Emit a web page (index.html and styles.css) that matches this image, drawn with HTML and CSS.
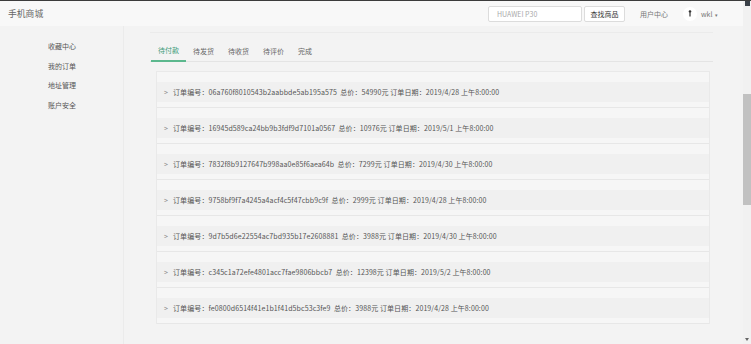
FILE: index.html
```html
<!DOCTYPE html>
<html lang="zh">
<head>
<meta charset="utf-8">
<title>手机商城</title>
<link rel="stylesheet" href="styles.css">
</head>
<body>
<div class="page">
  <header class="header">
    <div class="brand">手机商城</div>
    <div class="header-right">
      <input class="search" type="text" placeholder="HUAWEI P30">
      <button class="search-btn">查找商品</button>
      <span class="user-center">用户中心</span>
      <span class="avatar">
        <svg width="6" height="7" viewBox="0 0 6 7"><circle cx="3" cy="1.6" r="1.3" fill="#333"/><rect x="2.4" y="3" width="1.2" height="3.5" fill="#333"/></svg>
      </span>
      <span class="username">wkl <span class="caret">▾</span></span>
    </div>
  </header>
  <div class="body">
    <nav class="sidebar">
      <a class="side-item">收藏中心</a>
      <a class="side-item">我的订单</a>
      <a class="side-item">地址管理</a>
      <a class="side-item">账户安全</a>
    </nav>
    <main class="main">
      <div class="panel">
        <div class="tabs">
          <span class="tab active">待付款</span>
          <span class="tab">待发货</span>
          <span class="tab">待收货</span>
          <span class="tab">待评价</span>
          <span class="tab">完成</span>
        </div>
        <div class="orders">
          <div class="order"><div class="order-row"><span class="chev">&gt;</span>订单编号：06a760f8010543b2aabbde5ab195a575&nbsp; 总价：54990元 订单日期：2019/4/28 上午8:00:00</div></div>
          <div class="order"><div class="order-row"><span class="chev">&gt;</span>订单编号：16945d589ca24bb9b3fdf9d7101a0567&nbsp; 总价：10976元 订单日期：2019/5/1 上午8:00:00</div></div>
          <div class="order"><div class="order-row"><span class="chev">&gt;</span>订单编号：7832f8b9127647b998aa0e85f6aea64b&nbsp; 总价：7299元 订单日期：2019/4/30 上午8:00:00</div></div>
          <div class="order"><div class="order-row"><span class="chev">&gt;</span>订单编号：9758bf9f7a4245a4acf4c5f47cbb9c9f&nbsp; 总价：2999元 订单日期：2019/4/28 上午8:00:00</div></div>
          <div class="order"><div class="order-row"><span class="chev">&gt;</span>订单编号：9d7b5d6e22554ac7bd935b17e2608881&nbsp; 总价：3988元 订单日期：2019/4/30 上午8:00:00</div></div>
          <div class="order"><div class="order-row"><span class="chev">&gt;</span>订单编号：c345c1a72efe4801acc7fae9806bbcb7&nbsp; 总价：12398元 订单日期：2019/5/2 上午8:00:00</div></div>
          <div class="order"><div class="order-row"><span class="chev">&gt;</span>订单编号：fe0800d6514f41e1b1f41d5bc53c3fe9&nbsp; 总价：3988元 订单日期：2019/4/28 上午8:00:00</div></div>
        </div>
      </div>
    </main>
  </div>
</div>
<div class="scrollbar">
  <div class="sb-up"></div>
  <div class="sb-thumb"></div>
  <div class="sb-fill"></div>
  <div class="sb-down"></div>
</div>
</body>
</html>
```
FILE: styles.css
```css
* { box-sizing: border-box; }
html, body { margin: 0; padding: 0; }
body {
  width: 751px;
  height: 344px;
  overflow: hidden;
  display: flex;
  background: #f3f3f3;
  border-top: 1px solid #3c3c3c;
  font-family: "Noto Sans CJK SC", "Noto Sans", sans-serif;
  color: #555;
}
.page {
  flex: 1;
  display: flex;
  flex-direction: column;
  min-width: 0;
}
.header {
  height: 25px;
  background: #f8f8f8;
  display: flex;
  align-items: center;
  justify-content: space-between;
  padding: 0 0 0 8px;
}
.brand {
  font-size: 8.8px;
  color: #666;
}
.header-right {
  display: flex;
  align-items: center;
  margin-right: 25px;
}
.search {
  width: 94px;
  height: 16px;
  border: 1px solid #dcdcdc;
  border-radius: 2px;
  background: #fff;
  padding: 0 8px;
  font-family: inherit;
  font-size: 7px;
  color: #999;
  outline: none;
}
.search::placeholder { color: #aaa; }
.search-btn {
  margin-left: 2px;
  height: 16px;
  width: 41px;
  padding: 0;
  border: 1px solid #dcdcdc;
  border-radius: 2px;
  background: #fff;
  font-family: inherit;
  font-size: 7px;
  color: #333;
}
.user-center {
  margin-left: 15px;
  font-size: 7px;
  color: #777;
}
.avatar {
  margin-left: 15px;
  width: 14px;
  height: 14px;
  border-radius: 50%;
  background: #fff;
  display: flex;
  align-items: center;
  justify-content: center;
}
.username {
  margin-left: 4px;
  font-size: 7px;
  color: #777;
}
.caret { font-size: 5px; margin-left: 1px; }

.body {
  flex: 1;
  display: flex;
}
.sidebar {
  width: 124px;
  border-right: 1px solid #ebebeb;
  display: flex;
  flex-direction: column;
  padding: 14px 0 0 48px;
}
.side-item {
  height: 19.7px;
  line-height: 13px;
  font-size: 7px;
  color: #555;
}
.main {
  flex: 1;
  padding: 6px 30px 0 26px;
}
.panel {
  border-top: 1px solid #ebebeb;
  padding-top: 9px;
}
.tabs {
  display: flex;
  height: 20px;
  border-bottom: 1px solid #e4e4e4;
}
.tab {
  padding: 0 7px;
  font-size: 7px;
  line-height: 19px;
  color: #666;
}
.tab:first-child { margin-left: 1px; }
.tab.active {
  color: #3f9c7b;
  border-bottom: 2px solid #5cb88e;
  line-height: 17px;
  height: 20px;
  margin-bottom: -1px;
}
.orders {
  margin: 9px 3px 0 6px;
  border: 1px solid #e9e9e9;
  border-bottom: none;
  background: #f6f6f6;
}
.order {
  padding: 10px 0 5px;
  border-bottom: 1px solid #e7e7e7;
}
.order-row {
  height: 20px;
  background: #f0f0f0;
  display: flex;
  align-items: center;
  padding-left: 7px;
  font-size: 7px;
  letter-spacing: 0.1px;
  color: #555;
  white-space: nowrap;
}
.chev {
  color: #888;
  margin-right: 5px;
  font-size: 7px;
}
.scrollbar {
  width: 8px;
  background: #f1f1f1;
  display: flex;
  flex-direction: column;
  align-items: center;
}
.sb-up {
  width: 5px;
  height: 5px;
  background: #3a4048;
}
.sb-thumb {
  margin-top: 88px;
  width: 8px;
  height: 111px;
  background: #c1c1c1;
}
.sb-fill { flex: 1; }
.sb-down {
  width: 0;
  height: 0;
  border-left: 2px solid transparent;
  border-right: 2px solid transparent;
  border-top: 3px solid #666;
  margin-bottom: 3px;
}
```
